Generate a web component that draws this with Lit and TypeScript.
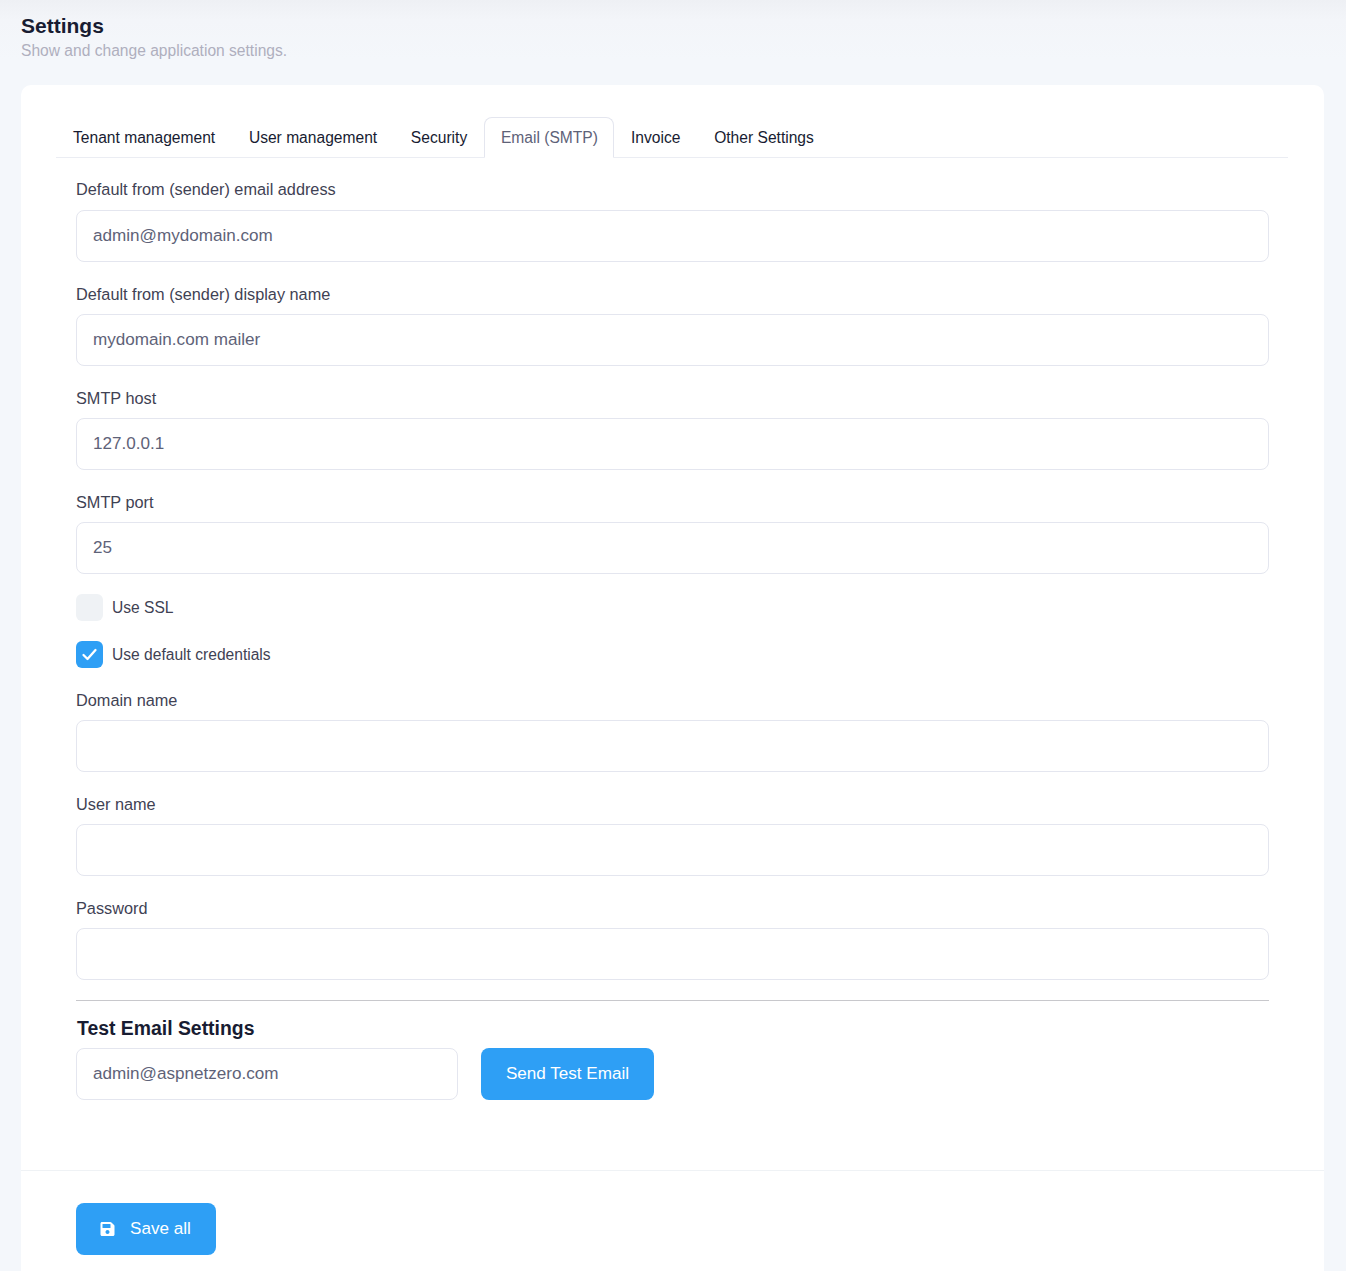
import { LitElement, html, css } from "lit";
import { customElement } from "lit/decorators.js";

const tabs = ["Tenant management", "User management", "Security", "Email (SMTP)", "Invoice", "Other Settings"];

@customElement("app-root")
export class AppRoot extends LitElement {
  static styles = css`
    :host { display: block; height: 1271px; overflow: hidden; box-sizing: border-box; background: linear-gradient(180deg, #eef0f4 0, #f3f5f9 20px, #f4f7fb 60px); font-family: "Liberation Sans", Arial, sans-serif; padding: 0 22px 0 21px; }
    .head { height: 85px; box-sizing: border-box; padding-top: 14px; }
    h1 { margin: 0; font-size: 21px; line-height: 24px; font-weight: 700; color: #181c32; }
    .sub { font-size: 15.6px; line-height: 24px; color: #afafbe; padding-top: 1px; }
    .card { background: #fff; border-radius: 10px; height: 1300px; box-sizing: border-box; padding-top: 32px; }
    .tabs { display: flex; margin: 0 36px 0 35px; border-bottom: 1px solid #ebedf3; height: 41px; box-sizing: border-box; }
    .tab { font-size: 15.6px; line-height: 24px; padding: 8px 16px; height: 40px; box-sizing: border-box; border: 1px solid transparent; border-radius: 8px 8px 0 0; color: #181c32; white-space: nowrap; }
    .tab + .tab { margin-left: -0.3px; }
    .tab.active { color: #5e6278; border-color: #e4e6ef #e4e6ef #fff; height: 41px; background: #fff; padding-right: 15.4px; }
    .body { padding: 19px 55px 0; }
    .group { margin-bottom: 20px; }
    .group:first-child label { margin-bottom: 9px; }
    label { display: block; font-size: 16.3px; line-height: 24px; margin-bottom: 8px; color: #3f4254; }
    .input { height: 52px; box-sizing: border-box; border: 1px solid #e4e6ef; border-radius: 8px; padding: 0 16px; font-size: 17.1px; line-height: 50px; color: #5e6278; background: #fff; }
    .check { display: flex; align-items: center; gap: 9px; height: 27px; margin-bottom: 20px; font-size: 15.6px; color: #3f4254; }
    .box { width: 27px; height: 27px; border-radius: 6px; background: #eff2f5; display: flex; align-items: center; justify-content: center; }
    .box.on { background: #2e9ff5; }
    hr { border: 0; border-top: 1px solid #c8c8cc; margin: 0; }
    h3 { margin: 0; padding: 15px 0 8px 1px; font-size: 19.4px; line-height: 24px; font-weight: 700; color: #181c32; }
    .test { display: flex; gap: 23px; }
    .test .input { width: 382px; }
    .btn { background: #2e9ff5; color: #fff; border-radius: 8px; height: 52px; box-sizing: border-box; font-size: 17.1px; line-height: 50px; padding: 0 24px; display: inline-flex; align-items: center; }
    .send { width: 173px; justify-content: center; }
    .foot { border-top: 1px solid #eff2f5; margin-top: 70px; padding: 32px 55px; }
    .save { width: 140px; padding-left: 24px; gap: 15px; }
  `;
  field(label: string, value = "") {
    return html`<div class="group"><label>${label}</label><div class="input">${value}</div></div>`;
  }
  render() {
    return html`
      <div class="head"><h1>Settings</h1><div class="sub">Show and change application settings.</div></div>
      <div class="card">
        <div class="tabs">${tabs.map((t) => html`<div class="tab ${t === "Email (SMTP)" ? "active" : ""}">${t}</div>`)}</div>
        <div class="body">
          ${this.field("Default from (sender) email address", "admin@mydomain.com")}
          ${this.field("Default from (sender) display name", "mydomain.com mailer")}
          ${this.field("SMTP host", "127.0.0.1")}
          ${this.field("SMTP port", "25")}
          <div class="check"><span class="box"></span>Use SSL</div>
          <div class="check"><span class="box on"><svg width="17" height="17" viewBox="0 0 17 17" fill="none"><path d="M2.500 9l4 4 8-9" stroke="#fff" stroke-width="2.300" stroke-linecap="round" stroke-linejoin="round"/></svg></span>Use default credentials</div>
          ${this.field("Domain name")}
          ${this.field("User name")}
          ${this.field("Password")}
          <hr />
          <h3>Test Email Settings</h3>
          <div class="test"><div class="input">admin@aspnetzero.com</div><div class="btn send">Send Test Email</div></div>
        </div>
        <div class="foot">
          <div class="btn save"><svg width="15" height="16" viewBox="0 0 448 512" fill="#fff"><path d="M433.9 129.9l-83.9-83.9A48 48 0 0 0 316.1 32H48C21.5 32 0 53.5 0 80v352c0 26.5 21.5 48 48 48h352c26.5 0 48-21.5 48-48V163.9a48 48 0 0 0-14.1-34zM224 416c-35.3 0-64-28.7-64-64s28.700-64 64-64 64 28.700 64 64-28.700 64-64 64zm96-304.500V212c0 6.600-5.400 12-12 12H76c-6.600 0-12-5.400-12-12V108c0-6.600 5.400-12 12-12h228.500c3.200 0 6.200 1.300 8.500 3.500l3.500 3.500a12 12 0 0 1 3.500 8.500z"/></svg>Save all</div>
        </div>
      </div>
    `;
  }
}
